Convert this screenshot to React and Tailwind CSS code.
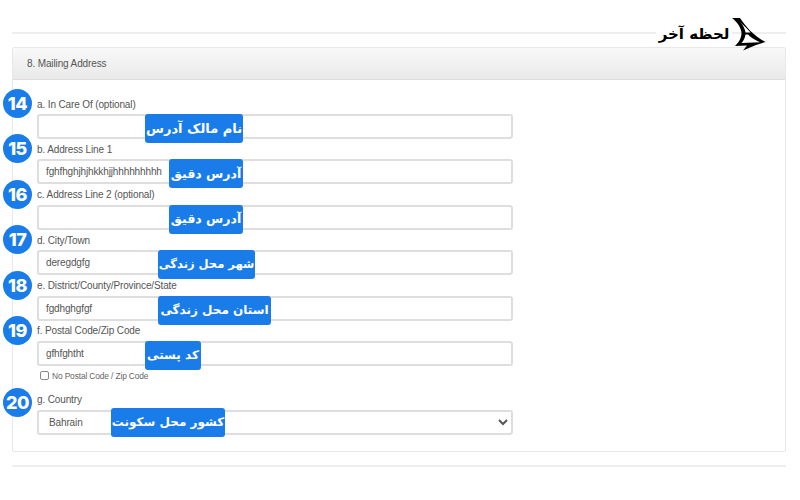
const fields = [
  { n: 14, label: 'a. In Care Of (optional)', badge: 'نام مالک آدرس', badgeClass: 'left-[106px] w-[98px] text-[13px]' },
  { n: 15, label: 'b. Address Line 1', value: 'fghfhghjhjhkkhjjhhhhhhhhh', badge: 'آدرس دقیق', badgeClass: 'left-[130px] w-[74px] text-[12.5px]' },
  { n: 16, label: 'c. Address Line 2 (optional)', badge: 'آدرس دقیق', badgeClass: 'left-[130px] w-[74px] text-[12.5px]' },
  { n: 17, label: 'd. City/Town', value: 'deregdgfg', badge: 'شهر محل زندگی', badgeClass: 'left-[119px] w-[97px] text-[11.5px]' },
  { n: 18, label: 'e. District/County/Province/State', value: 'fgdhghgfgf', badge: 'استان محل زندگی', badgeClass: 'left-[119px] w-[113px] text-[12px]' },
  { n: 19, label: 'f. Postal Code/Zip Code', value: 'gfhfghtht', badge: 'کد پستی', badgeClass: 'left-[106px] w-[56px] text-[12px]' },
]

function NumberDot({ n, className = 'top-[-5px]' }) {
  return (
    <span className={`absolute left-[-34px] w-[29px] h-[29px] rounded-full bg-[#1a7ce8] text-white flex items-center justify-center font-['Inter',sans-serif] font-extrabold text-[18px] tracking-[-0.5px] ${className}`}>
      {n}
    </span>
  )
}

function Badge({ text, className }) {
  return (
    <span
      dir="rtl"
      className={`absolute top-[-2px] h-[29px] rounded-[3px] bg-[#1a7ce8] text-white flex items-center justify-center font-['DejaVu_Sans',sans-serif] font-bold tracking-normal whitespace-nowrap ${className}`}
    >
      {text}
    </span>
  )
}

function Field({ n, label, value, badge, badgeClass }) {
  return (
    <div className="relative h-[45.4px]">
      <NumberDot n={n} />
      <div className="h-[20px] flex items-center">{label}</div>
      <div className="relative h-[25px] w-[476px] border-2 border-[#dedede] rounded-[3px] bg-white flex items-center pl-[7px]">
        {value}
        <Badge text={badge} className={badgeClass} />
      </div>
    </div>
  )
}

function Logo() {
  return (
    <div className="absolute left-[656px] top-[18px] flex items-center">
      <span dir="rtl" className="bg-white h-[24px] w-[76px] flex items-center justify-center font-['DejaVu_Sans',sans-serif] font-bold text-[15px] leading-none tracking-normal text-black whitespace-nowrap">
        لحظه آخر
      </span>
      <svg width="34" height="33" viewBox="0 0 34 33">
        <path d="M0 0H8C14 9 23 19 33.5 24L24 27L11 32.5L15 27.5L3 28C7 24 9.5 20 9.5 15C9 9 5 4 0 0Z" fill="#000" />
        <path d="M8 3.5C11 7 13 11 13.5 14.5H18.5C15 10.5 11 7 8 3.5ZM13.5 16.5C13 20 11.5 23 9.5 25L28 24.2C23 22 19 19.5 16 16.5H13.5Z" fill="#fff" />
      </svg>
    </div>
  )
}

export default function App() {
  return (
    <div className="relative w-[800px] h-[500px] overflow-hidden bg-white text-[#555] font-['Liberation_Sans',sans-serif] text-[10px] tracking-[-0.13px]">
      <Logo />
      <div className="pt-[32px] pl-[12px] w-[786px]">
        <div className="h-[2px] bg-[#eeeeee]" />
        <div className="mt-[13px] h-[405px] border border-[#e8e8e8] rounded-[2px]">
          <div className="h-[32px] bg-gradient-to-b from-[#f9f9f9] to-[#e9e9e9] border-b border-[#dddddd] flex items-center pl-[14px]">
            8. Mailing Address
          </div>
          <div className="pt-[14px] pl-[24px]">
            {fields.map(f => <Field key={f.n} {...f} />)}
            <div className="h-[19px] pl-[3px] flex items-center gap-[3px] text-[8.4px] text-[#666]">
              <span className="w-[9px] h-[9px] border border-[#888] rounded-[2px] bg-white" />
              No Postal Code / Zip Code
            </div>
            <div className="relative mt-[4px]">
              <NumberDot n={20} className="top-[-1px]" />
              <div className="h-[20.6px] flex items-center">g. Country</div>
              <div className="relative w-[476px] h-[25px]">
                <select
                  defaultValue="Bahrain"
                  className="w-full h-full border-2 border-[#dedede] rounded-[3px] bg-white pl-[6px] text-[10px] text-[#555] font-['Liberation_Sans',sans-serif] outline-none"
                >
                  <option>Bahrain</option>
                </select>
                <Badge text="کشور محل سکونت" className="left-[74px] w-[114px] text-[12px]" />
              </div>
            </div>
          </div>
        </div>
        <div className="mt-[13px] h-[2px] bg-[#eeeeee]" />
      </div>
    </div>
  )
}
